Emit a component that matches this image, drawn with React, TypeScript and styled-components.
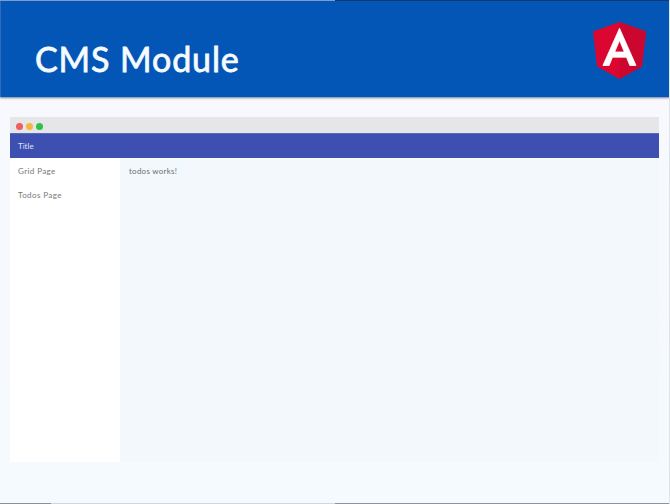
import React from "react";
import styled, { createGlobalStyle } from "styled-components";

const GlobalStyle = createGlobalStyle`
  body { margin: 0; }
  * { box-sizing: border-box; }
`;

const Slide = styled.main`
  width: 670px;
  height: 504px;
  display: flex;
  flex-direction: column;
  overflow: hidden;
  background: linear-gradient(#f8f8fd 98px, #f6f9fe 160px, #f5fafe 100%);
  border-right: 1px solid #e2e4ec;
`;

const TopEdge = styled.div`
  width: 670px;
  height: 1px;
  flex: none;
  background: linear-gradient(90deg, #7d9fd0 335px, #07346f 335px);
`;

const Header = styled.header`
  width: 670px;
  height: 96px;
  flex: none;
  display: flex;
  align-items: flex-start;
  justify-content: space-between;
  padding: 21px 24px 0 34px;
  background: #0356b6;
  border-left: 1px solid #2d6db8;
  box-shadow: 0 1px 2px #6d7f9b;
`;

const Heading = styled.h1`
  margin: 16px 0 0;
  font: 400 34px/42px "Lato", sans-serif;
  letter-spacing: 0.9px;
  -webkit-text-stroke: 0.8px #f5fbff;
  color: #f5fbff;
  white-space: nowrap;
`;

const Logo = styled.svg`
  width: 53px;
  height: 57px;
  flex: none;
`;

const BrowserWindow = styled.section`
  width: 649px;
  height: 345px;
  margin: 20px 0 0 10px;
  display: flex;
  flex-direction: column;
  flex: none;
  font: 8px/12px "Lato", sans-serif;
`;

const WindowBar = styled.div`
  height: 16px;
  flex: none;
  display: flex;
  align-items: center;
  gap: 3px;
  padding: 2px 0 0 6px;
  background: #e6e6e8;
`;

const Dot = styled.i<{ $color: string }>`
  width: 7px;
  height: 7px;
  border-radius: 50%;
  background: ${(p) => p.$color};
`;

const Toolbar = styled.div`
  height: 25px;
  flex: none;
  display: flex;
  align-items: center;
  padding: 0 0 1px 8px;
  color: #dfe3fa;
  background: #3d50b2;
  border-top: 1px solid #5968b9;
`;

const Workspace = styled.div`
  display: flex;
  flex: 1;
`;

const Sidebar = styled.nav`
  width: 110px;
  padding: 7px 0 0 8px;
  display: flex;
  flex-direction: column;
  gap: 12px;
  background: #fff;
`;

const NavItem = styled.span`
  color: #77777a;
  letter-spacing: 0.4px;
`;

const Content = styled.div`
  flex: 1;
  padding: 7px 0 0 9px;
  color: #6c6f73;
  letter-spacing: 0.25px;
  background: #f3f8fd;
`;

const BottomEdge = styled.div`
  width: 670px;
  height: 1px;
  margin-top: auto;
  flex: none;
  background: linear-gradient(90deg, #8b8f99 51px, #d3d7dd 51px, #d3d7dd 335px, #8b93a3 335px);
`;

export default function App() {
  return (
    <>
      <GlobalStyle />
      <Slide>
        <TopEdge />
        <Header>
          <Heading>CMS Module</Heading>
          <Logo viewBox="31.9 30 186.2 200" preserveAspectRatio="none" aria-label="Angular">
            <path fill="#dc0731" d="M125 30 31.9 63.2l14.2 123.1L125 230l78.9-43.7 14.2-123.1z" />
            <path fill="#cb0730" d="M125 30v200l78.9-43.7 14.2-123.1z" />
            <path fill="#fff" stroke="#fff" strokeWidth="3" d="M125 52.1 66.8 182.6h21.7l11.7-29.2h49.4l11.7 29.2H183zm17 83.3h-34l17-40.9z" />
          </Logo>
        </Header>
        <BrowserWindow>
          <WindowBar>
            <Dot $color="#f15b5b" />
            <Dot $color="#f3b63e" />
            <Dot $color="#2fc04c" />
          </WindowBar>
          <Toolbar>Title</Toolbar>
          <Workspace>
            <Sidebar>
              <NavItem>Grid Page</NavItem>
              <NavItem>Todos Page</NavItem>
            </Sidebar>
            <Content>todos works!</Content>
          </Workspace>
        </BrowserWindow>
        <BottomEdge />
      </Slide>
    </>
  );
}
